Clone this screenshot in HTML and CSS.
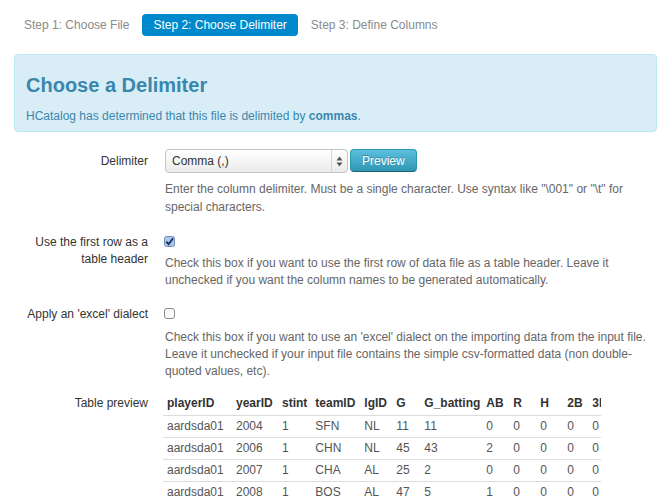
FILE: index.html
```html
<!DOCTYPE html>
<html lang="en">
<head>
<meta charset="utf-8">
<title>Choose a Delimiter</title>
<link rel="stylesheet" href="styles.css">
</head>
<body>
<div class="page">
  <ul class="steps">
    <li><a href="#">Step 1: Choose File</a></li>
    <li class="active"><a href="#">Step 2: Choose Delimiter</a></li>
    <li><a href="#">Step 3: Define Columns</a></li>
  </ul>

  <div class="alert-info">
    <h1>Choose a Delimiter</h1>
    <p>HCatalog has determined that this file is delimited by <b>commas</b>.</p>
  </div>

  <form class="form">
    <div class="group group-delim">
      <label class="glabel">Delimiter</label>
      <div class="controls">
        <div class="inline">
          <div class="select">
            <span class="select-text">Comma (,)</span>
            <span class="select-arrows">
              <svg width="7" height="11" viewBox="0 0 7 11"><path d="M3.5 0.5 L6.5 4.5 L0.5 4.5 Z" fill="#555"/><path d="M3.5 10.5 L6.5 6.5 L0.5 6.5 Z" fill="#555"/></svg>
            </span>
          </div>
          <button type="button" class="btn-info">Preview</button>
        </div>
        <p class="help help-delim">Enter the column delimiter. Must be a single character. Use syntax like "\001" or "\t" for special characters.</p>
      </div>
    </div>

    <div class="group group-header">
      <label class="glabel">Use the first row as a table header</label>
      <div class="controls">
        <div class="check">
          <svg width="11" height="11" viewBox="0 0 11 11"><rect x="0.5" y="0.5" width="10" height="10" rx="2" fill="#a9c6ea" stroke="#6f8fb8"/><path d="M2.3 5.6 L4.6 8.2 L9 2.2" fill="none" stroke="#1d2f5e" stroke-width="1.8"/></svg>
        </div>
        <p class="help">Check this box if you want to use the first row of data file as a table header. Leave it unchecked if you want the column names to be generated automatically.</p>
      </div>
    </div>

    <div class="group group-excel">
      <label class="glabel">Apply an 'excel' dialect</label>
      <div class="controls">
        <div class="check check-tall">
          <svg width="11" height="11" viewBox="0 0 11 11"><rect x="0.5" y="0.5" width="10" height="10" rx="2.5" fill="#fbfbfb" stroke="#8a8a8a"/></svg>
        </div>
        <p class="help">Check this box if you want to use an 'excel' dialect on the importing data from the input file. Leave it unchecked if your input file contains the simple csv-formatted data (non double-quoted values, etc).</p>
      </div>
    </div>

    <div class="group group-table">
      <label class="glabel">Table preview</label>
      <div class="controls">
        <div class="table-wrap">
          <table class="preview">
            <thead>
              <tr><th class="c1">playerID</th><th class="c2">yearID</th><th class="c3">stint</th><th class="c4">teamID</th><th class="c5">lgID</th><th class="c6">G</th><th class="c7">G_batting</th><th class="c8">AB</th><th class="c9">R</th><th class="c10">H</th><th class="c11">2B</th><th class="c12">3B</th><th>HR</th><th>RBI</th></tr>
            </thead>
            <tbody>
              <tr><td>aardsda01</td><td>2004</td><td>1</td><td>SFN</td><td>NL</td><td>11</td><td>11</td><td>0</td><td>0</td><td>0</td><td>0</td><td>0</td><td>0</td><td>0</td></tr>
              <tr><td>aardsda01</td><td>2006</td><td>1</td><td>CHN</td><td>NL</td><td>45</td><td>43</td><td>2</td><td>0</td><td>0</td><td>0</td><td>0</td><td>0</td><td>0</td></tr>
              <tr><td>aardsda01</td><td>2007</td><td>1</td><td>CHA</td><td>AL</td><td>25</td><td>2</td><td>0</td><td>0</td><td>0</td><td>0</td><td>0</td><td>0</td><td>0</td></tr>
              <tr><td>aardsda01</td><td>2008</td><td>1</td><td>BOS</td><td>AL</td><td>47</td><td>5</td><td>1</td><td>0</td><td>0</td><td>0</td><td>0</td><td>0</td><td>0</td></tr>
            </tbody>
          </table>
        </div>
      </div>
    </div>
  </form>
</div>
</body>
</html>
```

FILE: styles.css
```css
* { box-sizing: border-box; }

html, body {
  margin: 0;
  padding: 0;
  background: #ffffff;
}

body {
  font-family: "Liberation Sans", Arial, sans-serif;
  font-size: 12px;
  color: #333333;
  overflow: hidden;
}

.page {
  padding: 12px 12px 0 13px;
}

/* step pills */
.steps {
  list-style: none;
  margin: 0 0 16px 0;
  padding: 0;
  display: flex;
}

.steps li a {
  display: block;
  margin: 2px 2px 2px 0;
  padding: 4px 11px;
  line-height: 14px;
  border-radius: 4px;
  color: #8a8a8a;
  text-decoration: none;
}

.steps li.active a {
  background: #0088cc;
  color: #ffffff;
}

/* info box */
.alert-info {
  margin-left: 1px;
  background: #d9edf7;
  border: 1px solid #bce8f1;
  border-radius: 4px;
  padding: 8px 11px 6px;
  color: #3a87ad;
}

.alert-info h1 {
  margin: 4px 0;
  font-size: 20px;
  line-height: 36px;
  font-weight: bold;
  color: #3a87ad;
}

.alert-info p {
  margin: 0;
  line-height: 18px;
}

/* form */
.form {
  margin: 17px 0 0 0;
}

.group {
  display: flex;
  align-items: flex-start;
}

.group-delim { margin-bottom: 18px; }
.group-header { margin-bottom: 17px; }
.group-excel { margin-bottom: 15px; }

.glabel {
  width: 135px;
  flex: 0 0 135px;
  text-align: right;
  line-height: 17px;
  color: #333333;
}

.group-delim .glabel { padding-top: 4px; }

.controls {
  margin-left: 17px;
  flex: 1;
  min-width: 0;
}

.inline {
  display: flex;
  gap: 2px;
}

.select {
  width: 183px;
  height: 24px;
  display: flex;
  align-items: stretch;
  border: 1px solid #c4c4c4;
  border-radius: 4px;
  background: linear-gradient(#ffffff, #ebebeb);
  color: #333333;
}

.select-text {
  flex: 1;
  padding-left: 6px;
  line-height: 22px;
}

.select-arrows {
  width: 16px;
  border-left: 1px solid #d2d2d2;
  display: flex;
  align-items: center;
  justify-content: center;
}

.btn-info {
  height: 23px;
  padding: 0 11px;
  font-family: "Liberation Sans", Arial, sans-serif;
  font-size: 12px;
  color: #ffffff;
  background: linear-gradient(#5bc0de, #2f96b4);
  border: 1px solid #2f96b4;
  border-bottom-color: #1f6377;
  border-radius: 4px;
  text-shadow: 0 -1px 0 rgba(0,0,0,0.25);
}

.help {
  margin: 0;
  line-height: 17px;
  color: #666666;
}

.help-delim {
  margin-top: 7px;
  line-height: 18px;
}

.check {
  height: 21px;
  padding-top: 2px;
  margin-left: -1px;
  line-height: 0;
}

.check-tall { height: 23px; }

.check svg { display: block; }

/* table */
.table-wrap {
  width: 438px;
  overflow: hidden;
  margin-left: -2px;
}

.preview {
  border-collapse: collapse;
  white-space: nowrap;
}

.preview th,
.preview td {
  padding: 2px 4px 2px;
  line-height: 17px;
  text-align: left;
}

.preview th {
  font-weight: bold;
  color: #333333;
  padding-top: 0;
  padding-bottom: 3px;
}

.preview td {
  color: #555555;
  border-top: 1px solid #dddddd;
}

.preview .c1 { min-width: 69px; }
.preview .c2 { min-width: 46px; }
.preview .c3 { min-width: 33px; }
.preview .c4 { min-width: 49px; }
.preview .c5 { min-width: 32px; }
.preview .c6 { min-width: 28px; }
.preview .c7 { min-width: 62px; padding-right: 2px; }
.preview .c8 { min-width: 27px; }
.preview .c9 { min-width: 27px; }
.preview .c10 { min-width: 27px; }
.preview .c11 { min-width: 25px; }
.preview .c12 { min-width: 25px; }
```
